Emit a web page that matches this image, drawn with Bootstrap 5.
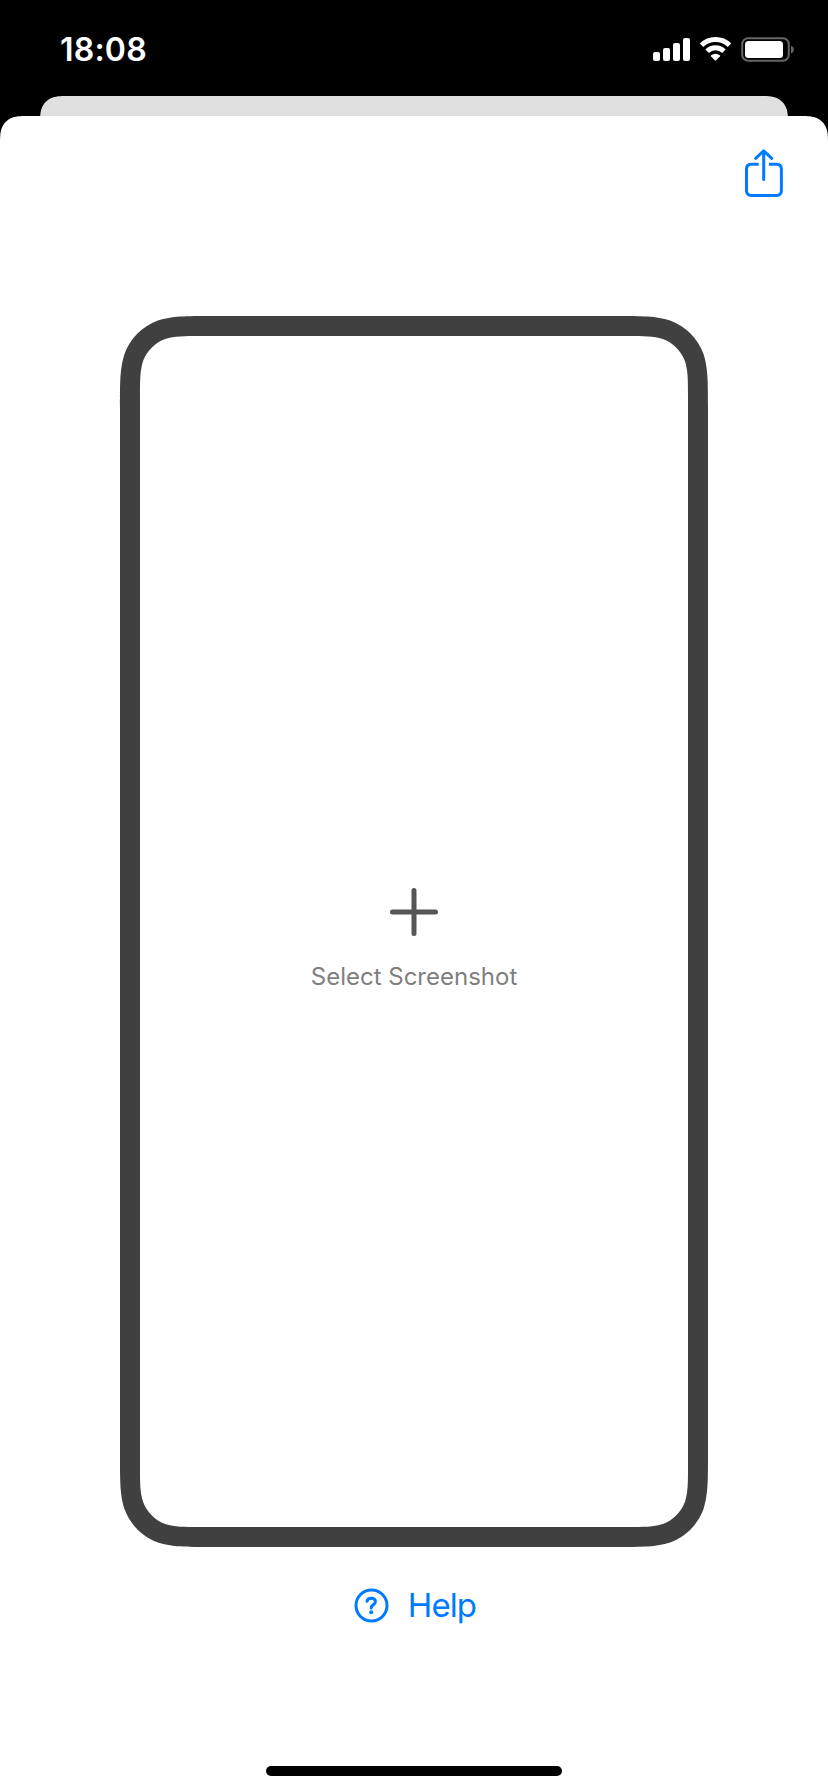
<!DOCTYPE html>
<html lang="en">
<head>
<meta charset="utf-8">
<meta name="viewport" content="width=device-width, initial-scale=1">
<title>Select Screenshot</title>
<link href="https://cdn.jsdelivr.net/npm/bootstrap@5.3.0/dist/css/bootstrap.min.css" rel="stylesheet">
<style>
  body { font-family: Inter, "Liberation Sans", sans-serif; height: 1792px; overflow: hidden; }
  svg { display: block; overflow: visible; }
  .status-bar { height: 96px; padding: 0 34px 0 60px; }
  .clock { font-size: 32px; font-weight: 600; line-height: 40px; margin-top: 30px; letter-spacing: .2px; }
  .status-icons { margin-top: 36px; }
  .back-sheet { height: 20px; margin: 0 40px; background: #e0e0e0;
    clip-path: path("M0 30.57C0 21.77 0 17.37 1.5 12.63C3.38 7.46 7.46 3.38 12.63 1.5C17.37 0 21.77 0 30.57 0H717.43C726.23 0 730.63 0 735.37 1.5C740.54 3.38 744.62 7.46 746.5 12.63C748 17.37 748 21.77 748 30.57Z"); }
  .front-sheet { height: 1676px;
    clip-path: path("M0 30.57C0 21.77 0 17.37 1.5 12.63C3.38 7.46 7.46 3.38 12.63 1.5C17.37 0 21.77 0 30.57 0H797.43C806.23 0 810.63 0 815.37 1.5C820.54 3.38 824.62 7.46 826.5 12.63C828 17.37 828 21.77 828 30.57V1676H0Z"); }
  .tool-row { height: 200px; padding: 33px 44px 0 0; }
  .ios-blue { color: #007aff; }
  .device { width: 588px; height: 1231px; background: none; padding-top: 572px; }
  .device-label { font-size: 24px; line-height: 30px; color: #7f7f7f; margin-top: 26px; }
  .help-link { margin: 36px 0 0 2px; height: 44px; font-size: 33px; line-height: 44px; gap: 19px; letter-spacing: -.9px; }
  .home-bar { width: 296px; height: 10px; border-radius: 5px; margin-bottom: 16px; }
</style>
</head>
<body class="bg-black">
<header class="status-bar d-flex justify-content-between align-items-start text-white">
  <div class="clock">18:08</div>
  <div class="status-icons d-flex">
    <svg width="141" height="28" viewBox="0 0 141 28" fill="#fff" aria-hidden="true">
      <rect x="0" y="16" width="7" height="9" rx="2"/>
      <rect x="10" y="12" width="7" height="13" rx="2"/>
      <rect x="20" y="7" width="7" height="18" rx="2"/>
      <rect x="30" y="2" width="7" height="23" rx="2"/>
      <g fill="none" stroke="#fff" stroke-width="5">
        <path d="M48.500 9.200A20 20 0 0 1 76.500 9.200"/>
        <path d="M54.100 15.200A12 12 0 0 1 70.900 15.200"/>
      </g>
      <path d="M57.900 19.400Q62.500 16 67.100 19.400Q67.500 19.800 67.100 20.300L63.200 24.300Q62.500 25 61.800 24.300L57.900 20.300Q57.500 19.800 57.900 19.400Z"/>
      <rect x="89.200" y="2.200" width="46.600" height="22.600" rx="6" fill="none" stroke="#666" stroke-width="2"/>
      <rect x="92" y="5" width="38" height="17" rx="3.500"/>
      <path d="M138 9.500Q141 10.800 141 13.500T138 17.500Z" fill="#666"/>
    </svg>
  </div>
</header>
<div class="back-sheet"></div>
<main class="front-sheet bg-white d-flex flex-column align-items-center">
  <div class="tool-row w-100 d-flex justify-content-end align-items-start">
    <a href="#" class="ios-blue" aria-label="Share">
      <svg width="39" height="48" viewBox="0 0 39 48" fill="none" stroke="currentColor" stroke-width="3" stroke-linecap="round" stroke-linejoin="round">
        <path d="M18.700 30.500V2M10.700 9.300L18.700 1.800L26.700 9.300"/>
        <path stroke-linecap="butt" d="M13.700 15.200H6.300Q1.500 15.200 1.500 20.100V41.600Q1.500 46.500 6.300 46.500H31.500Q36.400 46.500 36.400 41.600V20.100Q36.400 15.200 31.500 15.200H24"/>
      </svg>
    </a>
  </div>
  <section class="device position-relative d-flex flex-column align-items-center">
    <svg class="position-absolute top-0 start-0" width="588" height="1231" viewBox="0 0 588 1231" aria-hidden="true">
      <path fill="#404040" fill-rule="evenodd" d="M91.720 0H496.280C522.690 0 535.900 0 550.110 4.490C565.630 10.140 577.860 22.370 583.510 37.890C588 52.100 588 65.310 588 91.720V1139.280C588 1165.690 588 1178.900 583.510 1193.110C577.860 1208.630 565.630 1220.860 550.110 1226.510C535.900 1231 522.690 1231 496.280 1231H91.720C65.310 1231 52.100 1231 37.890 1226.510C22.370 1220.860 10.140 1208.630 4.490 1193.110C0 1178.900 0 1165.690 0 1139.280V91.720C0 65.310 0 52.100 4.490 37.890C10.140 22.370 22.370 10.140 37.890 4.490C52.100 0 65.310 0 91.720 0Z
        M81.150 20H506.850C524.460 20 533.260 20 542.740 23C553.090 26.760 561.240 34.910 565 45.260C568 54.740 568 63.540 568 81.150V1149.850C568 1167.460 568 1176.260 565 1185.740C561.240 1196.090 553.090 1204.240 542.740 1208C533.260 1211 524.460 1211 506.850 1211H81.150C63.540 1211 54.740 1211 45.260 1208C34.910 1204.240 26.760 1196.090 23 1185.740C20 1176.260 20 1167.460 20 1149.850V81.150C20 63.540 20 54.740 23 45.260C26.760 34.910 34.910 26.760 45.260 23C54.740 20 63.540 20 81.150 20Z"/>
    </svg>
    <svg width="48" height="48" viewBox="0 0 48 48" stroke="#555" stroke-width="5" stroke-linecap="round" aria-hidden="true">
      <path d="M24 2.500V45.500M2.500 24H45.500"/>
    </svg>
    <div class="device-label">Select Screenshot</div>
  </section>
  <a href="#" class="help-link ios-blue text-decoration-none d-flex align-items-center">
    <svg width="35" height="35" viewBox="0 0 35 35" fill="none" stroke="currentColor" stroke-width="3" aria-hidden="true">
      <circle cx="17.500" cy="17.500" r="15.500"/>
      <path stroke-linecap="round" stroke-linejoin="round" d="M13 13.300C13.300 11.200 15.100 10.300 17.200 10.300C19.700 10.300 21.400 11.700 21.400 13.800C21.400 16.800 17.200 16.800 17.200 20"/>
      <circle cx="17.200" cy="24.200" r="2" fill="currentColor" stroke="none"/>
    </svg>
    <span>Help</span>
  </a>
  <div class="home-bar bg-black mt-auto"></div>
</main>
<script src="https://cdn.jsdelivr.net/npm/bootstrap@5.3.0/dist/js/bootstrap.bundle.min.js"></script>
</body>
</html>
